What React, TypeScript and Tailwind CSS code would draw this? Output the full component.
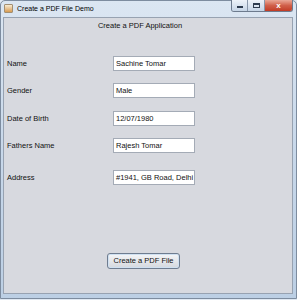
export default function App() {
  const rows = [
    { label: "Name", value: "Sachine Tomar", mt: "mt-[25px]" },
    { label: "Gender", value: "Male", mt: "mt-[12px]" },
    { label: "Date of Birth", value: "12/07/1980", mt: "mt-[13px]" },
    { label: "Fathers Name", value: "Rajesh Tomar", mt: "mt-[12px]" },
    { label: "Address", value: "#1941, GB Road, Delhi", mt: "mt-[17px]" },
  ];
  return (
    <div
      className="w-[297px] h-[300px] bg-[#dfe8f2] overflow-hidden"
      style={{ fontFamily: '"Liberation Sans", Arial, sans-serif' }}
    >
      <div className="w-[297px] h-[299px] bg-gradient-to-b from-[#dbe6f2] via-[#c8d8ea] to-[#bccfe4] border border-[#7d8c9f] rounded-t-[5px] flex flex-col pl-[2px] pr-[3px] pb-[4px]">
        <div className="h-[16px] flex items-start justify-between">
          <div className="flex items-start">
            <div className="mt-[3px] ml-[1px] w-[9px] h-[9px] bg-gradient-to-b from-[#f7ecd3] to-[#d79b4f] border border-[#a28f72] rounded-[1px]" />
            <div className="ml-[4px] mt-[3px] text-[7px] leading-[10px] text-black">Create a PDF File Demo</div>
          </div>
          <div className="flex h-[12px] mt-[-1px] border border-[#6d7b8e] border-t-0 rounded-b-[3px] overflow-hidden">
            <div className="w-[16px] bg-gradient-to-b from-[#eef3f9] to-[#c6d5e6] border-r border-[#8897aa] flex items-center justify-center">
              <div className="w-[6px] h-[2px] bg-[#2d3b4e] mt-[3px]" />
            </div>
            <div className="w-[17px] bg-gradient-to-b from-[#eef3f9] to-[#c6d5e6] border-r border-[#8897aa] flex items-center justify-center">
              <div className="w-[7px] h-[5px] border border-[#2d3b4e] border-t-2" />
            </div>
            <div className="w-[27px] bg-gradient-to-b from-[#e9a897] via-[#d0604a] to-[#c23b24] flex items-center justify-center text-white text-[8px] font-bold leading-none">
              x
            </div>
          </div>
        </div>
        <div className="flex-1 bg-[#d7d9df] border border-[#97a2b1] flex flex-col text-[7.5px] text-[#111]">
          <div className="text-center mt-[3px] leading-[10px] pr-[16px]">Create a PDF Application</div>
          {rows.map((r) => (
            <div key={r.label} className={`flex items-center h-[15px] ${r.mt}`}>
              <div className="w-[109px] pl-[3px] leading-[10px]">{r.label}</div>
              <div className="w-[82px] h-[15px] bg-white border border-[#a4abb6] pl-[2px] leading-[13px] whitespace-nowrap overflow-hidden">
                {r.value}
              </div>
            </div>
          ))}
          <div className="flex-1" />
          <div className="flex mb-[24px] pl-[103px]">
            <div className="w-[73px] h-[16px] rounded-[3px] border border-[#6f7d90] bg-gradient-to-b from-[#f5f6f8] to-[#d4d8de] leading-[14px] text-center text-[#111] shadow-[inset_0_0_0_1px_#cfe0f1]">
              Create a PDF File
            </div>
          </div>
        </div>
      </div>
    </div>
  );
}
